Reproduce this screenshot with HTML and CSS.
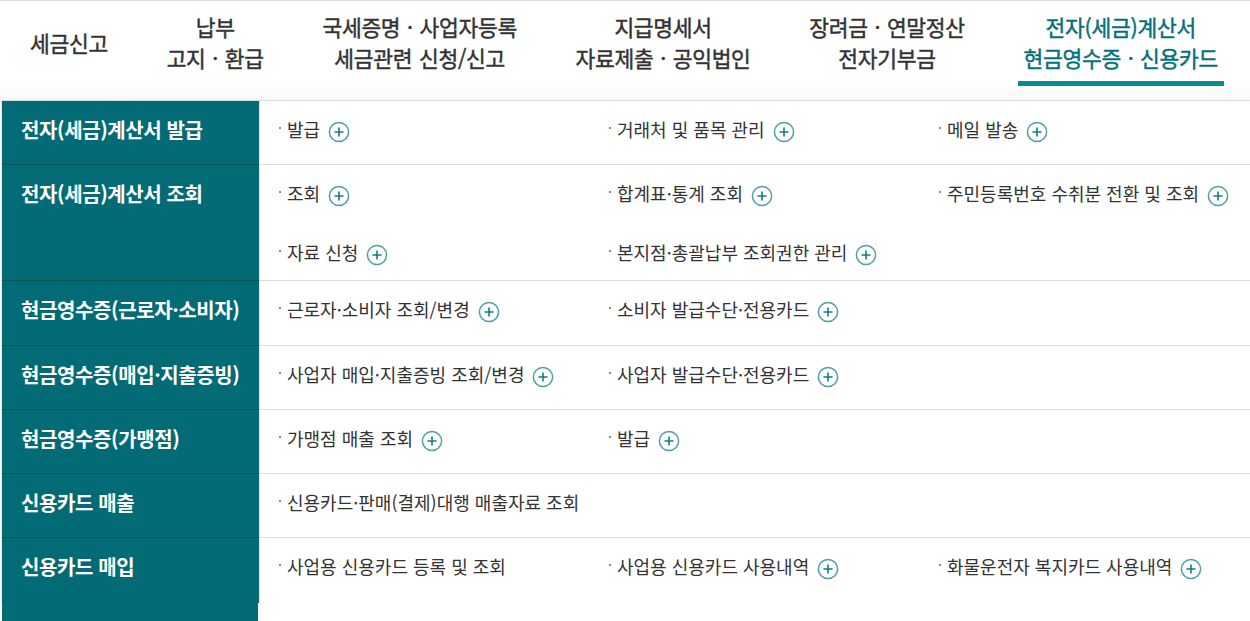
FILE: index.html
```html
<!DOCTYPE html>
<html lang="ko">
<head>
    <meta charset="utf-8">
    <link rel="stylesheet" href="styles.css">
</head>
<body>
    <!-- Top category nav -->
    <div class="gnb">
        <ul class="gnb-list">
            <li class="gnb-item"><a href="#">세금신고</a></li>
            <li class="gnb-item"><a href="#">납부<br>고지 · 환급</a></li>
            <li class="gnb-item"><a href="#">국세증명 · 사업자등록<br>세금관련 신청/신고</a></li>
            <li class="gnb-item"><a href="#">지급명세서<br>자료제출 · 공익법인</a></li>
            <li class="gnb-item"><a href="#">장려금 · 연말정산<br>전자기부금</a></li>
            <li class="gnb-item active"><a href="#">전자(세금)계산서<br>현금영수증 · 신용카드</a></li>
        </ul>
    </div>

    <!-- Sub menu table -->
    <div class="menu">
        <div class="menu-row">
            <div class="menu-title">전자(세금)계산서 발급</div>
            <ul class="menu-items">
                <li><a href="#">발급</a><span class="more"><svg viewBox="0 0 22 22"><circle cx="11" cy="11" r="9.6"/><path d="M11 6.5v9M6.5 11h9"/></svg></span></li>
                <li><a href="#">거래처 및 품목 관리</a><span class="more"><svg viewBox="0 0 22 22"><circle cx="11" cy="11" r="9.6"/><path d="M11 6.5v9M6.5 11h9"/></svg></span></li>
                <li><a href="#">메일 발송</a><span class="more"><svg viewBox="0 0 22 22"><circle cx="11" cy="11" r="9.6"/><path d="M11 6.5v9M6.5 11h9"/></svg></span></li>
            </ul>
        </div>
        <div class="menu-row">
            <div class="menu-title">전자(세금)계산서 조회</div>
            <ul class="menu-items">
                <li><a href="#">조회</a><span class="more"><svg viewBox="0 0 22 22"><circle cx="11" cy="11" r="9.6"/><path d="M11 6.5v9M6.5 11h9"/></svg></span></li>
                <li><a href="#">합계표·통계 조회</a><span class="more"><svg viewBox="0 0 22 22"><circle cx="11" cy="11" r="9.6"/><path d="M11 6.5v9M6.5 11h9"/></svg></span></li>
                <li><a href="#">주민등록번호 수취분 전환 및 조회</a><span class="more"><svg viewBox="0 0 22 22"><circle cx="11" cy="11" r="9.6"/><path d="M11 6.5v9M6.5 11h9"/></svg></span></li>
                <li><a href="#">자료 신청</a><span class="more"><svg viewBox="0 0 22 22"><circle cx="11" cy="11" r="9.6"/><path d="M11 6.5v9M6.5 11h9"/></svg></span></li>
                <li><a href="#">본지점·총괄납부 조회권한 관리</a><span class="more"><svg viewBox="0 0 22 22"><circle cx="11" cy="11" r="9.6"/><path d="M11 6.5v9M6.5 11h9"/></svg></span></li>
            </ul>
        </div>
        <div class="menu-row">
            <div class="menu-title">현금영수증(근로자·소비자)</div>
            <ul class="menu-items">
                <li><a href="#">근로자·소비자 조회/변경</a><span class="more"><svg viewBox="0 0 22 22"><circle cx="11" cy="11" r="9.6"/><path d="M11 6.5v9M6.5 11h9"/></svg></span></li>
                <li><a href="#">소비자 발급수단·전용카드</a><span class="more"><svg viewBox="0 0 22 22"><circle cx="11" cy="11" r="9.6"/><path d="M11 6.5v9M6.5 11h9"/></svg></span></li>
            </ul>
        </div>
        <div class="menu-row">
            <div class="menu-title">현금영수증(매입·지출증빙)</div>
            <ul class="menu-items">
                <li><a href="#">사업자 매입·지출증빙 조회/변경</a><span class="more"><svg viewBox="0 0 22 22"><circle cx="11" cy="11" r="9.6"/><path d="M11 6.5v9M6.5 11h9"/></svg></span></li>
                <li><a href="#">사업자 발급수단·전용카드</a><span class="more"><svg viewBox="0 0 22 22"><circle cx="11" cy="11" r="9.6"/><path d="M11 6.5v9M6.5 11h9"/></svg></span></li>
            </ul>
        </div>
        <div class="menu-row">
            <div class="menu-title">현금영수증(가맹점)</div>
            <ul class="menu-items">
                <li><a href="#">가맹점 매출 조회</a><span class="more"><svg viewBox="0 0 22 22"><circle cx="11" cy="11" r="9.6"/><path d="M11 6.5v9M6.5 11h9"/></svg></span></li>
                <li><a href="#">발급</a><span class="more"><svg viewBox="0 0 22 22"><circle cx="11" cy="11" r="9.6"/><path d="M11 6.5v9M6.5 11h9"/></svg></span></li>
            </ul>
        </div>
        <div class="menu-row">
            <div class="menu-title">신용카드 매출</div>
            <ul class="menu-items">
                <li><a href="#">신용카드·판매(결제)대행 매출자료 조회</a></li>
            </ul>
        </div>
        <div class="menu-row last">
            <div class="menu-title">신용카드 매입</div>
            <ul class="menu-items">
                <li><a href="#">사업용 신용카드 등록 및 조회</a></li>
                <li><a href="#">사업용 신용카드 사용내역</a><span class="more"><svg viewBox="0 0 22 22"><circle cx="11" cy="11" r="9.6"/><path d="M11 6.5v9M6.5 11h9"/></svg></span></li>
                <li><a href="#">화물운전자 복지카드 사용내역</a><span class="more"><svg viewBox="0 0 22 22"><circle cx="11" cy="11" r="9.6"/><path d="M11 6.5v9M6.5 11h9"/></svg></span></li>
            </ul>
        </div>
    </div>
    <div class="menu-tail"></div>
</body>
</html>
```

FILE: styles.css
```css
body {
    font-family: "Noto Sans CJK KR", "Noto Sans", sans-serif;
    margin: 0;
    background: #fff;
    color: #333;
}
ul {
    list-style: none;
    margin: 0;
    padding: 0;
}
a {
    color: inherit;
    text-decoration: none;
}

/* top nav */
.gnb {
    border-top: 1px solid #d9d9d9;
    border-bottom: 1px solid #dcdcdc;
    height: 99px;
    background: linear-gradient(to bottom, #fff 82%, #f8f8f8);
}
.gnb-list {
    display: flex;
    justify-content: space-between;
    align-items: flex-start;
    padding: 10px 26px 0 24px;
}
.gnb-item a {
    display: flex;
    align-items: center;
    justify-content: center;
    min-height: 62px;
    padding: 0 6px 8px;
    border-bottom: 5px solid transparent;
    font-size: 21.5px;
    font-weight: 400;
    -webkit-text-stroke: 0.45px currentColor;
    line-height: 31px;
    letter-spacing: -0.3px;
    word-spacing: 1px;
    text-align: center;
    color: #333;
}
.gnb-item.active a {
    color: #05707a;
    border-bottom-color: #088a94;
}

/* sub menu */
.menu {
    margin-left: 1px;
    border-left: 1px solid #e6e6e6;
}
.menu-row {
    display: flex;
    min-height: 64.3px;
}
.menu-title {
    width: 238px;
    flex-shrink: 0;
    padding: 17px 0 0 19px;
    background: #036b75;
    border-bottom: 1px solid #0b5259;
    color: #fff;
    font-size: 20px;
    font-weight: bold;
    line-height: 24px;
    letter-spacing: -0.4px;
}
.menu-items {
    flex: 1;
    display: grid;
    grid-template-columns: repeat(3, 1fr);
    row-gap: 33px;
    align-content: start;
    padding: 16px 0 14px;
    border-left: 1px solid #e4e4e4;
    border-bottom: 1px solid #dcdcdc;
}
.menu-row.last .menu-title,
.menu-row.last .menu-items {
    border-bottom: none;
}
.menu-items li {
    padding-left: 19px;
    font-size: 18px;
    line-height: 24px;
    letter-spacing: 0;
    color: #333;
    white-space: nowrap;
}
.menu-items li::before {
    content: "";
    display: inline-block;
    width: 2px;
    height: 2px;
    margin-right: 6px;
    vertical-align: 8px;
    background: #888;
}
.more {
    display: inline-block;
    width: 22px;
    height: 22px;
    margin-left: 8px;
    vertical-align: -6px;
}
.more svg {
    width: 22px;
    height: 22px;
    display: block;
}
.more circle {
    fill: #fff;
    stroke: #519fa5;
    stroke-width: 1.5;
}
.more path {
    stroke: #117d86;
    stroke-width: 1.6;
    fill: none;
}
.menu-tail {
    width: 256px;
    height: 20px;
    margin-left: 2px;
    background: #036b75;
}
```
